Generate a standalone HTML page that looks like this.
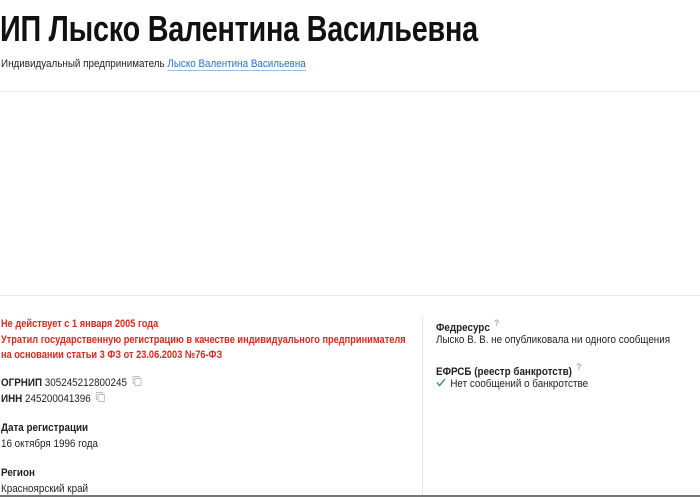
<!DOCTYPE html>
<html><head><meta charset="utf-8"><style>
body{margin:0;width:700px;height:497px;overflow:hidden;background:#fff;font-family:"Liberation Sans",sans-serif;color:#222;position:relative}
.a{position:absolute;white-space:nowrap}
.t{transform:scaleX(0.895);transform-origin:0 0}
.r.t{transform:scaleX(0.84)}
h1{position:absolute;left:0;top:8px;margin:0;font-size:36px;font-weight:bold;color:#111;transform:scaleX(0.80);transform-origin:0 0;white-space:nowrap;letter-spacing:-0.3px}
.s{font-size:11px}
.b{font-weight:bold}
.r{color:#e0271d;font-weight:bold;font-size:11px}
.cp{display:inline-block;width:6px;height:6px;border:1px solid #bbb;border-radius:1px;margin-left:6px;vertical-align:0;box-shadow:-2px -2px 0 -1px #fff,-2px -2px 0 0 #bbb}
.q{color:#aaa;font-size:9px;vertical-align:5px;margin-left:5px}
</style></head><body>
<h1>ИП Лыско Валентина Васильевна</h1>
<div class="a s t" style="left:1px;top:58px">Индивидуальный предприниматель <span style="color:#2c6fcf;border-bottom:1px solid #9bbbe8">Лыско Валентина Васильевна</span></div>
<div class="a" style="left:0;top:91px;width:700px;height:1px;background:#e6e6e6"></div>
<div class="a" style="left:0;top:295px;width:700px;height:1px;background:#e6e6e6"></div>
<div class="a" style="left:422px;top:316px;width:1px;height:180px;background:#e6e6e6"></div>
<div class="a" style="left:0;top:495px;width:700px;height:2px;background:#777"></div>
<div class="a r t" style="left:1px;top:318px">Не действует с 1 января 2005 года</div>
<div class="a r t" style="left:1px;top:334px">Утратил государственную регистрацию в качестве индивидуального предпринимателя</div>
<div class="a r t" style="left:1px;top:349px">на основании статьи 3 ФЗ от 23.06.2003 №76-ФЗ</div>
<div class="a s t" style="left:1px;top:377px"><span class="b">ОГРНИП</span> 305245212800245<span class="cp" style="margin-left:8px"></span></div>
<div class="a s t" style="left:1px;top:393px"><span class="b">ИНН</span> 245200041396<span class="cp" style="margin-left:8px"></span></div>
<div class="a s b t" style="left:1px;top:422px">Дата регистрации</div>
<div class="a s t" style="left:1px;top:438px">16 октября 1996 года</div>
<div class="a s b t" style="left:1px;top:467px">Регион</div>
<div class="a s t" style="left:1px;top:483px">Красноярский край</div>
<div class="a s b t" style="left:436px;top:318px">Федресурс<span class="q">?</span></div>
<div class="a s t" style="left:436px;top:334px">Лыско В. В. не опубликовала ни одного сообщения</div>
<div class="a s b t" style="left:436px;top:362px">ЕФРСБ (реестр банкротств)<span class="q">?</span></div>
<div class="a s t" style="left:436px;top:378px"><svg width="11" height="9" viewBox="0 0 11 9" style="margin-right:5px;vertical-align:0"><path d="M1 4.5L4 7.5L10 1" fill="none" stroke="#2aa04a" stroke-width="1.5"/></svg>Нет сообщений о банкротстве</div>
</body></html>
